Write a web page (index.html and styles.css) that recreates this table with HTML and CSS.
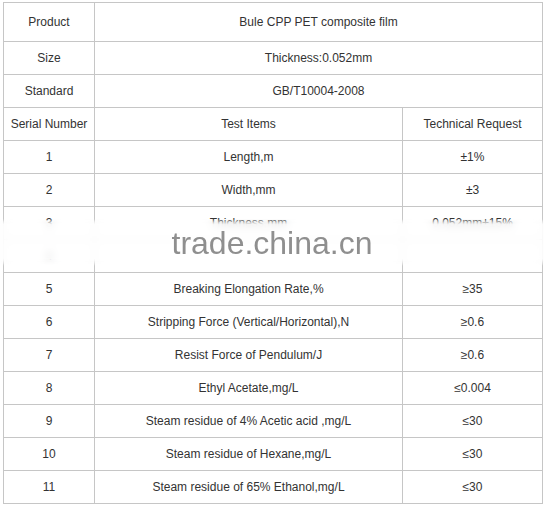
FILE: index.html
```html
<!DOCTYPE html>
<html>
<head>
<meta charset="utf-8">
<link rel="stylesheet" href="styles.css">
</head>
<body>
<div class="wrap">
  <table class="spec">
    <colgroup>
      <col class="c1"><col class="c2"><col class="c3">
    </colgroup>
    <tr class="first"><td>Product</td><td colspan="2">Bule CPP PET composite film</td></tr>
    <tr><td>Size</td><td colspan="2">Thickness:0.052mm</td></tr>
    <tr><td>Standard</td><td colspan="2">GB/T10004-2008</td></tr>
    <tr><td>Serial Number</td><td>Test Items</td><td>Technical Request</td></tr>
    <tr><td>1</td><td>Length,m</td><td>±1%</td></tr>
    <tr><td>2</td><td>Width,mm</td><td>±3</td></tr>
    <tr><td>3</td><td>Thickness,mm</td><td>0.052mm±15%</td></tr>
    <tr><td>4</td><td></td><td></td></tr>
    <tr><td>5</td><td>Breaking Elongation Rate,%</td><td>≥35</td></tr>
    <tr><td>6</td><td>Stripping Force (Vertical/Horizontal),N</td><td>≥0.6</td></tr>
    <tr><td>7</td><td>Resist Force of Pendulum/J</td><td>≥0.6</td></tr>
    <tr><td>8</td><td>Ethyl Acetate,mg/L</td><td>≤0.004</td></tr>
    <tr><td>9</td><td>Steam residue of 4% Acetic acid ,mg/L</td><td>≤30</td></tr>
    <tr><td>10</td><td>Steam residue of Hexane,mg/L</td><td>≤30</td></tr>
    <tr><td>11</td><td>Steam residue of 65% Ethanol,mg/L</td><td>≤30</td></tr>
  </table>
  <div class="band"></div>
  <div class="mark">trade.china.cn</div>
</div>
</body>
</html>
```

FILE: styles.css
```css
html, body {
  margin: 0;
  padding: 0;
  background: #ffffff;
}
.wrap {
  position: relative;
  padding: 2px 0 0 3px;
  width: 541px;
}
.spec {
  border-collapse: collapse;
  table-layout: fixed;
  width: 539px;
  font-family: "Liberation Sans", Arial, sans-serif;
  font-size: 12px;
  color: #333333;
}
.c1 { width: 91px; }
.c2 { width: 308px; }
.c3 { width: 140px; }
.spec td {
  border: 1px solid #c6c6c6;
  padding: 0;
  height: 32px;
  text-align: center;
  vertical-align: middle;
  line-height: 14px;
}
.spec tr.first td {
  height: 38px;
}
.band {
  position: absolute;
  left: 0;
  top: 219px;
  width: 544px;
  height: 47px;
  background: rgba(255, 255, 255, 0.8);
  backdrop-filter: blur(4px);
  -webkit-mask-image: linear-gradient(to bottom, transparent 0, #000 12%, #000 84%, transparent 100%);
  mask-image: linear-gradient(to bottom, transparent 0, #000 12%, #000 84%, transparent 100%);
}
.mark {
  position: absolute;
  left: 0;
  top: 223px;
  width: 544px;
  text-align: center;
  font-family: "Liberation Sans", Arial, sans-serif;
  font-size: 32px;
  line-height: 40px;
  color: #8f8f8f;
  letter-spacing: 0;
}
```
